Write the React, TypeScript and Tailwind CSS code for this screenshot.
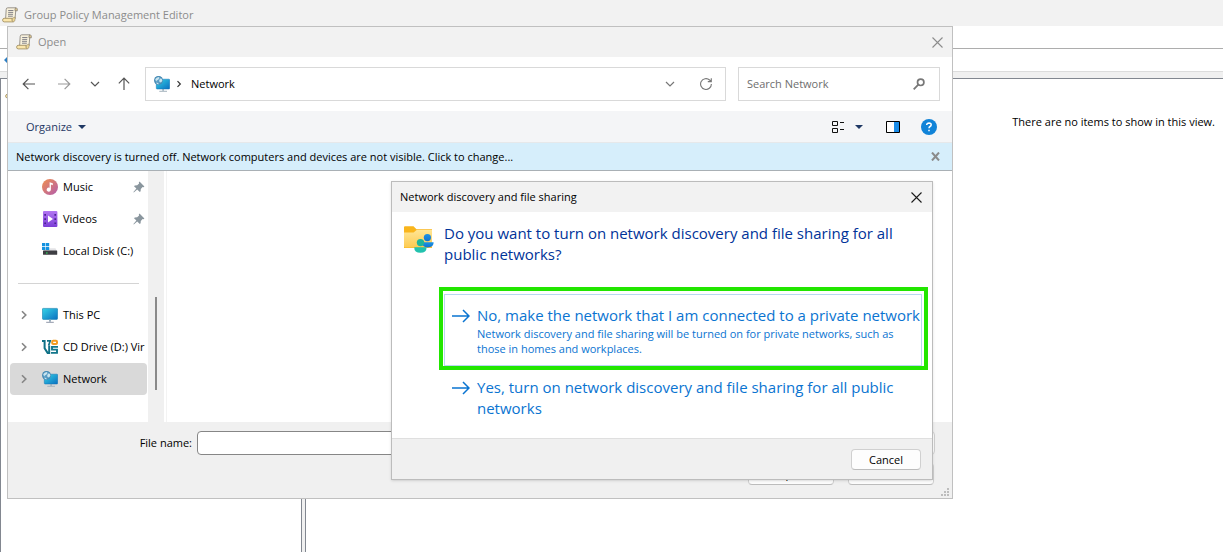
import React from 'react';

function ScrollIcon() {
  return (
    <svg className="size-4 shrink-0" viewBox="0 0 16 16" aria-hidden="true">
      <path d="M4.2 2.4Q4.2.8 5.8.8H14L13 12H3.6Z" fill="#f8f1dc" stroke="#8f8a82" strokeWidth=".9" />
      <path d="M13 3.8V2.2Q13.2.8 14.4.9 15.7 1.3 15.3 3.8Z" fill="#e6cf94" stroke="#7d756a" strokeWidth=".7" />
      <path d="M2 11.3H10.2Q9.6 13.8 11.4 14.9H2.2Q.5 14.7.6 13.1.7 11.5 2 11.3Z" fill="#fbe6ab" stroke="#a59366" strokeWidth=".9" />
      <path d="M10.2 11.3Q9.6 13.8 11.4 14.9 13.2 14.6 13.1 12V10Z" fill="#f0d894" stroke="#94866a" strokeWidth=".6" />
      <path d="M6.2 3.5H11.4M6.2 5.4H11.2M6 7.3H11M6 9.2H10.8" stroke="#77777f" strokeWidth=".9" />
    </svg>
  );
}

function MonitorIcon({ globe = false }: { globe?: boolean }) {
  const id = globe ? 'screen-net' : 'screen-pc';
  return (
    <svg className="size-4 shrink-0" viewBox="0 0 16 16" aria-hidden="true">
      <defs>
        <linearGradient id={id} x1="0" y1="0" x2="1" y2="1">
          <stop offset="0" stopColor="#35d3e6" />
          <stop offset="1" stopColor="#0a6fc0" />
        </linearGradient>
      </defs>
      {globe ? (
        <>
          <rect x="2.3" y="3.2" width="13.4" height="9.8" rx=".8" fill={`url(#${id})`} stroke="#1173b5" strokeWidth=".5" />
          <path d="M8.3 13H9.9V14.8H8.3Z" fill="#8fa6b6" />
          <path d="M5.3 15.3H13" stroke="#a6b3bd" strokeWidth="1" />
          <circle cx="4.5" cy="4.4" r="4.3" fill="#5a9cc4" />
          <circle cx="4.5" cy="4.4" r="4" fill="none" stroke="#3c7faa" strokeWidth=".7" />
          <path d="M1.2 3.2Q2.4 1 4.8.9L5.6 2 4.2 3.8 2.8 4.4 2.2 5.4ZM6.2 2.4L7.8 2.8 8.4 4.8 7 6.6 5.4 5.8 5.2 4.2ZM2.6 6.4L4.4 7.2 4.6 8.4 2.6 7.8Z" fill="#c9e4ee" />
        </>
      ) : (
        <>
          <rect x=".4" y="1.4" width="15.2" height="11" rx=".8" fill={`url(#${id})`} stroke="#1681ac" strokeWidth=".6" />
          <path d="M7.1 12.6H8.9V14.8H7.1Z" fill="#8fa6b6" />
          <path d="M4.2 15.3H11.8" stroke="#8f97a8" strokeWidth="1" />
        </>
      )}
    </svg>
  );
}

function MusicIcon() {
  return (
    <svg className="size-4 shrink-0" viewBox="0 0 16 16" aria-hidden="true">
      <defs>
        <linearGradient id="music" x1="0" y1="0" x2="1" y2="1">
          <stop offset="0" stopColor="#f0904e" />
          <stop offset="1" stopColor="#b25cae" />
        </linearGradient>
      </defs>
      <circle cx="8" cy="8" r="8" fill="url(#music)" />
      <path d="M7.6 3.2L10.8 4.2V6.2L8.9 5.6V10.6A2.1 2.1 0 1 1 7.6 8.7Z" fill="#fff" />
    </svg>
  );
}

function VideoIcon() {
  return (
    <svg className="size-4 shrink-0" viewBox="0 0 16 16" aria-hidden="true">
      <defs>
        <linearGradient id="video" x1="0" y1="0" x2="0" y2="1">
          <stop offset="0" stopColor="#b276f2" />
          <stop offset="1" stopColor="#7b3ed6" />
        </linearGradient>
      </defs>
      <rect x="1" width="14.4" height="16" rx="1" fill="url(#video)" />
      <path d="M2.3 3H4V4.7H2.3ZM2.3 7.2H4V8.9H2.3ZM2.3 11.4H4V13.1H2.3ZM12.4 3H14.1V4.7H12.4ZM12.4 7.2H14.1V8.9H12.4ZM12.4 11.4H14.1V13.1H12.4Z" fill="#4a2390" />
      <path d="M6 4.4L11 8 6 11.6Z" fill="#fff" />
    </svg>
  );
}

function DiskIcon() {
  return (
    <svg className="size-4 shrink-0" viewBox="0 0 16 16" aria-hidden="true">
      <path d="M3 5.2H13.5L15 8.5H1.2Z" fill="#e3e3e6" />
      <rect x="1" y="7.6" width="14.2" height="4.2" rx=".5" fill="#3d3d42" />
      <rect x="4" y="9.4" width="1.6" height="1.2" fill="#2ed15a" />
      <path d="M0 0H3.3V3.1H0ZM3.9 0H7.2V3.1H3.9ZM0 3.7H3.3V7H0ZM3.9 3.7H7.2V7H3.9Z" fill="#1492e0" />
    </svg>
  );
}

function VirtIoIcon() {
  return (
    <svg className="size-4 shrink-0" viewBox="0 0 16 16" fill="none" aria-hidden="true">
      <path d="M0 1.9H2.6V9.2L5.6 13.9H7.2V6.4" stroke="#0f7186" strokeWidth="2" />
      <path d="M5 1.9H8.2L6.6 6.6" stroke="#0f7186" strokeWidth="1.7" />
      <path d="M16 7.9H10V10.6H15V13.9H9" stroke="#12768a" strokeWidth="1.9" />
      <rect x="10.2" y="1.7" width="4.8" height="3.4" rx="1" stroke="#f39a1e" strokeWidth="2" />
    </svg>
  );
}

function Pin() {
  return (
    <svg className="size-3 shrink-0" viewBox="0 0 12 12" aria-hidden="true">
      <path d="M6.5.6L11.4 5.4 10.6 6.2 9.6 6 7.8 7.9 7.6 10.2 6.8 11 4.2 8.4.8 11.4.4 11 3.4 7.6 1 5.2 1.8 4.4 4.2 4.3 6.1 2.4 5.8 1.4Z" fill="#8a969e" />
    </svg>
  );
}

function Chevron({ className = '' }: { className?: string }) {
  return (
    <svg className={`shrink-0 ${className}`} viewBox="0 0 8 10" fill="none" aria-hidden="true">
      <path d="M2 1.2L5.8 5 2 8.8" stroke="currentColor" strokeWidth="1.6" />
    </svg>
  );
}

function ChevronDown() {
  return (
    <svg className="h-2 w-2.5 shrink-0" viewBox="0 0 10 8" fill="none" aria-hidden="true">
      <path d="M1 2L5 6 9 2" stroke="currentColor" strokeWidth="1.2" />
    </svg>
  );
}

function Caret() {
  return (
    <svg className="h-1 w-2 shrink-0" viewBox="0 0 8 4" aria-hidden="true">
      <path d="M0 0H8L4 4Z" fill="#1f3864" />
    </svg>
  );
}

function Cross() {
  return (
    <svg className="size-[11px]" viewBox="0 0 11 11" fill="none" aria-hidden="true">
      <path d="M.5.5L10.5 10.5M10.5.5L.5 10.5" stroke="currentColor" strokeWidth="1.1" />
    </svg>
  );
}

function Arrow({ dir = 'left' }: { dir?: 'left' | 'right' | 'up' }) {
  const paths = {
    left: 'M13 7H1.2M6.4 1.8L1.2 7 6.4 12.2',
    right: 'M1 7H12.8M7.6 1.8L12.8 7 7.6 12.2',
    up: 'M7 13V1.2M1.8 6.4L7 1.2 12.2 6.4',
  };
  return (
    <svg className="size-3.5" viewBox="0 0 14 14" fill="none" aria-hidden="true">
      <path d={paths[dir]} stroke="currentColor" strokeWidth="1.2" />
    </svg>
  );
}

function CommandArrow() {
  return (
    <svg className="mt-1 h-3.5 w-[18px] shrink-0" viewBox="0 0 18 14" fill="none" aria-hidden="true">
      <path d="M0 7H17M11 1L17 7 11 13" stroke="#0a74d1" strokeWidth="1.5" />
    </svg>
  );
}

function SharedFolderIcon() {
  return (
    <svg className="h-7 w-[30px] shrink-0" viewBox="0 0 30 28" aria-hidden="true">
      <defs>
        <linearGradient id="folder" x1="0" y1="0" x2="0" y2="1">
          <stop offset="0" stopColor="#ffe594" />
          <stop offset="1" stopColor="#fdcb52" />
        </linearGradient>
        <linearGradient id="person" x1="0" y1="0" x2="0" y2="1">
          <stop offset="0" stopColor="#1b93e6" />
          <stop offset="1" stopColor="#1173d0" />
        </linearGradient>
      </defs>
      <path d="M0 1.2Q0 .2 1 .2H9.5L12.5 3.2H28V22H0Z" fill="#f9b51c" />
      <path d="M0 6.4H9.6L12.6 4H28V21.4H1Q0 21.4 0 20.6Z" fill="url(#folder)" />
      <circle cx="23.4" cy="11.6" r="3.6" fill="url(#person)" />
      <path d="M17.6 16.3H29.6Q30 21.4 23.6 21.4 18 21.4 17.6 16.3Z" fill="url(#person)" />
      <circle cx="16.5" cy="16.6" r="3.7" fill="#1fb59c" />
      <path d="M10.2 21.2H22.6Q22.6 26.8 16.4 26.8 10.2 26.8 10.2 21.2Z" fill="#22c2ae" />
    </svg>
  );
}

type Item = { label: string; icon: React.ReactNode; pinned?: boolean; expandable?: boolean; selected?: boolean };

const quickItems: Item[] = [
  { label: 'Music', icon: <MusicIcon />, pinned: true },
  { label: 'Videos', icon: <VideoIcon />, pinned: true },
  { label: 'Local Disk (C:)', icon: <DiskIcon /> },
];

const treeItems: Item[] = [
  { label: 'This PC', icon: <MonitorIcon />, expandable: true },
  { label: 'CD Drive (D:) Vir', icon: <VirtIoIcon />, expandable: true },
  { label: 'Network', icon: <MonitorIcon globe />, expandable: true, selected: true },
];

function NavRow({ item }: { item: Item }) {
  return (
    <li>
      <button
        type="button"
        className={`flex h-8 w-full items-center rounded-sm pl-2.5 text-left ${item.selected ? 'bg-[#d9d9d9]' : ''}`}
      >
        <span className="flex w-[22px] shrink-0 text-[#858585]">{item.expandable && <Chevron className="h-2.5 w-2" />}</span>
        {item.icon}
        <span className="ml-[5px] min-w-0 flex-1 whitespace-nowrap">{item.label}</span>
        {item.pinned && <span className="pr-0.5"><Pin /></span>}
      </button>
    </li>
  );
}

function SharingPrompt() {
  return (
    <section
      role="dialog"
      aria-labelledby="prompt-title"
      className="absolute left-[391px] top-[181px] flex w-[542px] flex-col border border-[#bcbcbc] bg-white shadow-sm"
    >
      <header className="flex h-[30px] items-center justify-between bg-[#f2f2f2] pl-2 pr-2.5">
        <h2 id="prompt-title">Network discovery and file sharing</h2>
        <button type="button" aria-label="Close" className="text-[#1a1a1a]"><Cross /></button>
      </header>
      <div className="flex flex-col pb-[19px] pl-[47px] pr-1 pt-[11px]">
        <div className="-ml-[35px] flex gap-2.5 pr-8">
          <span className="pt-[3px]"><SharedFolderIcon /></span>
          <p className="text-[15px] leading-[21px] text-[#003399]">
            Do you want to turn on network discovery and file sharing for all public networks?
          </p>
        </div>
        <div className="mt-[22px] border-4 border-[#22e600] pl-px pr-0.5 pt-[3px]">
          <button type="button" className="flex w-full gap-[7px] border border-[#b8d8f0] pb-[9px] pl-[7px] pt-2.5 text-left text-[#0a74d1]">
            <CommandArrow />
            <span className="min-w-0 flex-1">
              <span className="block whitespace-nowrap text-[15px] leading-[21px]">No, make the network that I am connected to a private network</span>
              <span className="block pr-4 leading-[15px]">
                Network discovery and file sharing will be turned on for private networks, such as those in homes and workplaces.
              </span>
            </span>
          </button>
        </div>
        <button type="button" className="mt-[7px] flex gap-[7px] pl-[13px] pr-7 text-left text-[#0a74d1]">
          <CommandArrow />
          <span className="text-[15px] leading-[21px]">Yes, turn on network discovery and file sharing for all public networks</span>
        </button>
      </div>
      <footer className="flex h-[41px] items-center justify-end border-t border-[#dfdfdf] bg-[#f0f0f0] px-[11px]">
        <button type="button" className="h-[21px] w-[70px] rounded border border-[#d0d0d0] border-b-[#bcbcbc] bg-[#fdfdfd] leading-[19px]">Cancel</button>
      </footer>
    </section>
  );
}

function OpenDialog() {
  return (
    <section
      role="dialog"
      aria-labelledby="open-title"
      className="absolute left-[7px] top-[26px] flex w-[946px] flex-col border border-[#c0c0c0] bg-white"
    >
      <header className="flex h-[30px] items-center bg-[#f2f2f2] pl-2 pr-[9px] text-[#8c8c8c]">
        <ScrollIcon />
        <h2 id="open-title" className="ml-1.5 flex-1">Open</h2>
        <button type="button" aria-label="Close"><Cross /></button>
      </header>

      <div className="flex h-[54px] items-center pl-3.5 pr-3">
        <nav aria-label="History" className="flex w-[123px] items-center text-[#555]">
          <button type="button" aria-label="Back"><Arrow /></button>
          <button type="button" aria-label="Forward" className="ml-[21px] text-[#9a9a9a]"><Arrow dir="right" /></button>
          <button type="button" aria-label="Recent locations" className="ml-[19px]"><ChevronDown /></button>
          <button type="button" aria-label="Up" className="ml-[17px]"><Arrow dir="up" /></button>
        </nav>
        <div className="flex h-[34px] min-w-0 flex-1 items-center border border-[#d9d9d9] px-2">
          <MonitorIcon globe />
          <Chevron className="ml-1.5 h-2 w-1.5 text-[#333]" />
          <span className="ml-[9px] flex-1">Network</span>
          <button type="button" aria-label="Show locations" className="text-[#777]"><ChevronDown /></button>
          <button type="button" aria-label="Refresh" className="ml-[25px] mr-[5px] text-[#777]">
            <svg className="size-3" viewBox="0 0 12 12" fill="none" aria-hidden="true">
              <path d="M11.4 6A5.4 5.4 0 1 1 9.6 2L11.2 3.4M11.3.2V3.6H7.8" stroke="currentColor" strokeWidth="1.1" />
            </svg>
          </button>
        </div>
        <label className="ml-3 flex h-[34px] w-[202px] items-center border border-[#d9d9d9] pl-2 pr-3.5">
          <input type="search" aria-label="Search Network" placeholder="Search Network" className="min-w-0 flex-1 bg-transparent outline-none placeholder:text-[#6e6e6e]" />
          <svg className="size-3 shrink-0" viewBox="0 0 12 12" fill="none" aria-hidden="true">
            <circle cx="7.7" cy="4.3" r="3.2" stroke="#777" strokeWidth="1.7" />
            <path d="M5.3 6.7L.7 11.3" stroke="#777" strokeWidth="1.8" />
          </svg>
        </label>
      </div>

      <div className="flex h-8 items-center border-b border-[#e6e8ea] bg-[#f4f5f7] pl-[18px] pr-[15px]">
        <button type="button" className="flex items-center gap-1.5 text-[#1f3864]">Organize <Caret /></button>
        <button type="button" aria-label="Change view" className="ml-auto flex items-center gap-2.5">
          <svg className="h-3 w-[13px]" viewBox="0 0 13 12" fill="none" aria-hidden="true">
            <path d="M.5.5H5.5V4.5H.5ZM.5 7.5H5.5V11.5H.5ZM8 1.5H12M8 8.5H12" stroke="#111" />
          </svg>
          <Caret />
        </button>
        <button type="button" aria-label="Preview pane" className="ml-[23px]">
          <svg className="h-3 w-3.5" viewBox="0 0 14 12" aria-hidden="true">
            <path d="M.5.5H13.5V11.5H.5Z" fill="#fff" stroke="#000" />
            <path d="M8 1H13V11H8Z" fill="#1a8ce8" />
          </svg>
        </button>
        <button type="button" aria-label="Help" className="ml-[21px]">
          <svg className="size-4" viewBox="0 0 16 16" fill="none" aria-hidden="true">
            <circle cx="8" cy="8" r="8" fill="#1083d8" />
            <path d="M5.8 6V5.2Q6.2 3.9 8 3.9 10.2 4 10.2 5.7 10.2 6.8 9 7.5 8 8.1 8 9.3M8 10.7V12.2" stroke="#fff" strokeWidth="1.5" />
          </svg>
        </button>
      </div>

      <div className="flex h-7 items-center justify-between border-b border-[#a9b0b5] bg-[#d6eefb] pl-2 pr-3">
        <button type="button">Network discovery is turned off. Network computers and devices are not visible. Click to change...</button>
        <button type="button" aria-label="Dismiss">
          <svg className="size-[9px]" viewBox="0 0 9 9" fill="none" aria-hidden="true">
            <path d="M1 .5L8 8.5M8 .5L1 8.5" stroke="#8b8b8b" strokeWidth="2" />
          </svg>
        </button>
      </div>

      <div className="flex h-[251px]">
        <nav aria-label="Folders" className="w-[140px] pl-0.5 pr-px">
          <ul>{quickItems.map((item) => <NavRow key={item.label} item={item} />)}</ul>
          <div className="flex h-8 items-center px-2"><hr className="w-full border-[#d4d4d4]" /></div>
          <ul>{treeItems.map((item) => <NavRow key={item.label} item={item} />)}</ul>
        </nav>
        <div className="flex w-4 justify-center bg-[#f0f0f0] pt-[126px]">
          <div className="h-[93px] w-0.5 bg-[#8a8a8a]" />
        </div>
        <div className="ml-0.5 flex-1 border-l border-[#f3f3f3]" />
      </div>

      <footer className="flex h-[76px] flex-col bg-[#f0f0f0] pt-[9px]">
        <div className="flex items-center pr-[17px]">
          <label htmlFor="file-name" className="w-[189px] pr-[5px] text-right">File name:</label>
          <input id="file-name" type="text" className="h-6 min-w-0 flex-1 rounded-sm border border-[#868686] bg-white px-1 outline-none" />
          <select aria-label="File type" className="ml-2 h-6 w-[170px] appearance-none rounded-sm border border-[#cfcfcf] bg-[#fdfdfd]" />
        </div>
        <div className="mt-2 flex justify-end gap-3.5 pr-[18px]">
          <button type="button" className="h-[22px] w-[86px] rounded border border-[#d0d0d0] border-b-[#bcbcbc] bg-[#fdfdfd]">Open</button>
          <button type="button" className="h-[22px] w-[86px] rounded border border-[#d0d0d0] border-b-[#bcbcbc] bg-[#fdfdfd]">Cancel</button>
        </div>
        <svg className="mb-0.5 mr-[3px] mt-auto size-2 self-end" viewBox="0 0 8 8" aria-hidden="true">
          <path d="M6 0H8V2H6ZM3 3H5V5H3ZM6 3H8V5H6ZM0 6H2V8H0ZM3 6H5V8H3ZM6 6H8V8H6Z" fill="#bdbdbd" />
        </svg>
      </footer>
    </section>
  );
}

export default function App() {
  return (
    <main className="relative flex h-screen flex-col overflow-hidden bg-white font-['Open_Sans','Noto_Sans',sans-serif] text-[11px] leading-4 text-black">
      <header className="flex h-[26px] shrink-0 items-center bg-[#f2f2f2] pl-0.5 pt-1 text-[#8c8c8c]">
        <ScrollIcon />
        <h1 className="ml-1.5">Group Policy Management Editor</h1>
      </header>
      <div className="h-[23px] shrink-0 border-b border-[#adadad]" />
      <div className="flex h-[22px] shrink-0 items-center pl-1">
        <svg className="size-3" viewBox="0 0 12 12" aria-hidden="true"><path d="M0 6L6 0V4H12V8H6V12Z" fill="#2d7fc4" /></svg>
      </div>
      <div className="h-[7px] shrink-0 border-t border-[#dcdcdc] bg-[#f0f0f0]" />
      <div className="flex min-h-0 flex-1 bg-[#f0f0f0]">
        <div className="w-[302px] border-l border-r border-t border-[#828790] bg-white pl-1 pt-1">
          <ScrollIcon />
        </div>
        <div className="ml-[3px] flex-1 border-l border-t border-[#828790] bg-white pr-2 pt-[35px] text-right">
          There are no items to show in this view.
        </div>
      </div>
      <OpenDialog />
      <SharingPrompt />
    </main>
  );
}
